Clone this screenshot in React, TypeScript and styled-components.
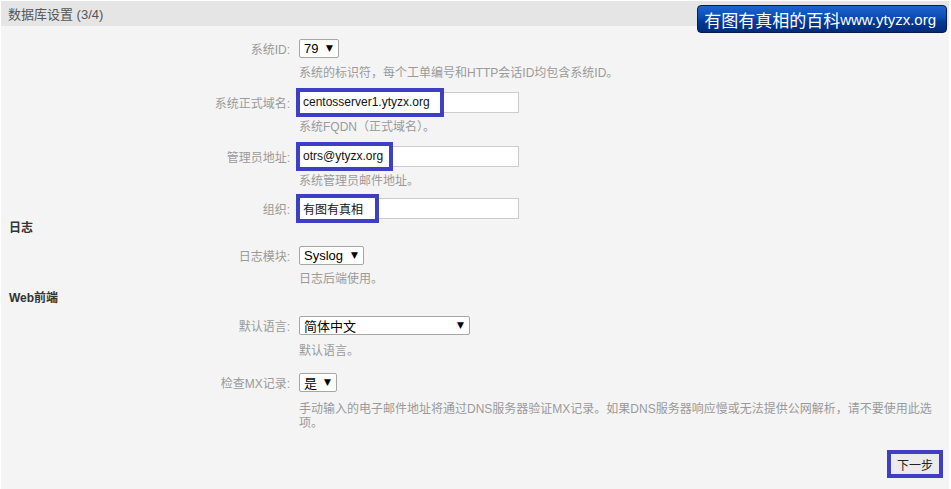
import React from "react";
import styled, { createGlobalStyle } from "styled-components";

const GlobalStyle = createGlobalStyle`
  html, body { margin: 0; padding: 0; background: #ffffff; }
  body { font-family: "Liberation Sans", "Noto Sans CJK SC", sans-serif; }
`;

const Page = styled.div`
  padding: 1px 2px 0 1px;
  height: 488px;
  display: flex;
  flex-direction: column;
`;

const Header = styled.div`
  position: relative;
  height: 25px;
  background: #e5e5e5;
  display: flex;
  align-items: center;
  padding-left: 7px;
  font-size: 13px;
  color: #555555;
  font-family: "Liberation Sans", "Noto Sans CJK SC", sans-serif;
`;

const Watermark = styled.div`
  position: absolute;
  top: 4px;
  right: 2px;
  height: 26px;
  display: flex;
  align-items: center;
  padding: 0 10px 0 6px;
  border: 1px solid #0a1a4a;
  border-radius: 4px;
  background: linear-gradient(#1e63cf 0%, #0b4cb3 45%, #003a98 60%, #002a7a 100%);
  color: #ffffff;
  white-space: nowrap;
`;

const WmCjk = styled.span`
  font-family: "Noto Sans CJK SC", sans-serif;
  font-size: 17px;
`;

const WmUrl = styled.span`
  font-family: "Liberation Sans", sans-serif;
  font-size: 15px;
`;

const Body = styled.div`
  flex: 1;
  background: #f4f4f4;
  padding: 11px 0 0 0;
  display: flex;
  flex-direction: column;
`;

const Block = styled.div<{ $gap: number }>`
  display: flex;
  flex-direction: column;
  margin-bottom: ${(p) => p.$gap}px;
`;

const Row = styled.div`
  display: grid;
  grid-template-columns: 289px 1fr;
  column-gap: 9px;
  align-items: center;
  min-height: 22px;
`;

const Label = styled.div`
  text-align: right;
  font-size: 12px;
  color: #9a9a9a;
  font-family: "Liberation Sans", "Noto Sans CJK SC", sans-serif;
`;

const Desc = styled.div<{ $mt?: number }>`
  padding-left: 298px;
  padding-right: 10px;
  margin-top: ${(p) => p.$mt ?? 7}px;
  font-size: 12px;
  line-height: 14px;
  color: #9a9a9a;
  font-family: "Liberation Sans", "Noto Sans CJK SC", sans-serif;
`;

const Section = styled.div<{ $top: number }>`
  padding-left: 8px;
  margin-top: ${(p) => p.$top}px;
  margin-bottom: 8px;
  font-size: 12px;
  line-height: 16px;
  font-weight: bold;
  color: #333333;
  font-family: "Liberation Sans", "Noto Sans CJK SC", sans-serif;
`;

const InputBox = styled.div`
  position: relative;
  width: 218px;
  height: 19px;
  background: #ffffff;
  border: 1px solid #cccccc;
`;

const Highlight = styled.div<{ $w: number }>`
  position: absolute;
  left: -4px;
  top: -5px;
  width: ${(p) => p.$w}px;
  height: 21px;
  background: #ffffff;
  border: 4px solid #3f3fc6;
  display: flex;
  align-items: center;
  padding-left: 3px;
  font-size: 12px;
  color: #111111;
  font-family: "Liberation Sans", "Noto Sans CJK SC", sans-serif;
  white-space: nowrap;
`;

const Select = styled.div<{ $w?: number }>`
  display: inline-flex;
  align-items: center;
  justify-content: space-between;
  box-sizing: border-box;
  height: 19px;
  width: ${(p) => (p.$w ? `${p.$w}px` : "auto")};
  justify-self: start;
  padding: 0 5px 0 4px;
  background: #ffffff;
  border: 1px solid #a6a6a6;
  border-radius: 2px;
  font-size: 13px;
  color: #000000;
  font-family: "Liberation Sans", "Noto Sans CJK SC", sans-serif;
`;

const Arrow = styled.span`
  font-size: 9px;
  margin-left: 7px;
  color: #000000;
  font-family: "DejaVu Sans", sans-serif;
`;

const Footer = styled.div`
  display: flex;
  justify-content: flex-end;
  padding-right: 6px;
  margin-top: 20px;
`;

const ButtonFrame = styled.div`
  border: 4px solid #3f3fc6;
  display: flex;
`;

const Button = styled.button`
  width: 48px;
  height: 20px;
  padding: 0;
  border: none;
  background: #ebebeb;
  font-size: 12px;
  color: #222222;
  font-family: "Noto Sans CJK SC", sans-serif;
  cursor: pointer;
`;

type TextFieldProps = { label: string; value: string; hw: number };

const TextField = ({ label, value, hw }: TextFieldProps) => (
  <Row>
    <Label>{label}</Label>
    <InputBox>
      <Highlight $w={hw}>{value}</Highlight>
    </InputBox>
  </Row>
);

export default function App() {
  return (
    <>
      <GlobalStyle />
      <Page>
        <Header>
          数据库设置 (3/4)
          <Watermark>
            <WmCjk>有图有真相的百科</WmCjk>
            <WmUrl>www.ytyzx.org</WmUrl>
          </Watermark>
        </Header>
        <Body>
          <Block $gap={11}>
            <Row>
              <Label>系统ID:</Label>
              <Select $w={40}>
                79<Arrow>▼</Arrow>
              </Select>
            </Row>
            <Desc>系统的标识符，每个工单编号和HTTP会话ID均包含系统ID。</Desc>
          </Block>
          <Block $gap={11}>
            <TextField label="系统正式域名:" value="centosserver1.ytyzx.org" hw={137} />
            <Desc>系统FQDN（正式域名）。</Desc>
          </Block>
          <Block $gap={9}>
            <TextField label="管理员地址:" value="otrs@ytyzx.org" hw={86} />
            <Desc>系统管理员邮件地址。</Desc>
          </Block>
          <Block $gap={0}>
            <TextField label="组织:" value="有图有真相" hw={72} />
          </Block>
          <Section $top={1}>日志</Section>
          <Block $gap={0}>
            <Row>
              <Label>日志模块:</Label>
              <Select $w={65}>
                Syslog<Arrow>▼</Arrow>
              </Select>
            </Row>
            <Desc $mt={6}>日志后端使用。</Desc>
          </Block>
          <Section $top={4}>Web前端</Section>
          <Block $gap={13}>
            <Row>
              <Label>默认语言:</Label>
              <Select $w={171}>
                简体中文<Arrow>▼</Arrow>
              </Select>
            </Row>
            <Desc $mt={8}>默认语言。</Desc>
          </Block>
          <Block $gap={0}>
            <Row>
              <Label>检查MX记录:</Label>
              <Select $w={38}>
                是<Arrow>▼</Arrow>
              </Select>
            </Row>
            <Desc $mt={9}>
              手动输入的电子邮件地址将通过DNS服务器验证MX记录。如果DNS服务器响应慢或无法提供公网解析，请不要使用此选项。
            </Desc>
          </Block>
          <Footer>
            <ButtonFrame>
              <Button>下一步</Button>
            </ButtonFrame>
          </Footer>
        </Body>
      </Page>
    </>
  );
}
